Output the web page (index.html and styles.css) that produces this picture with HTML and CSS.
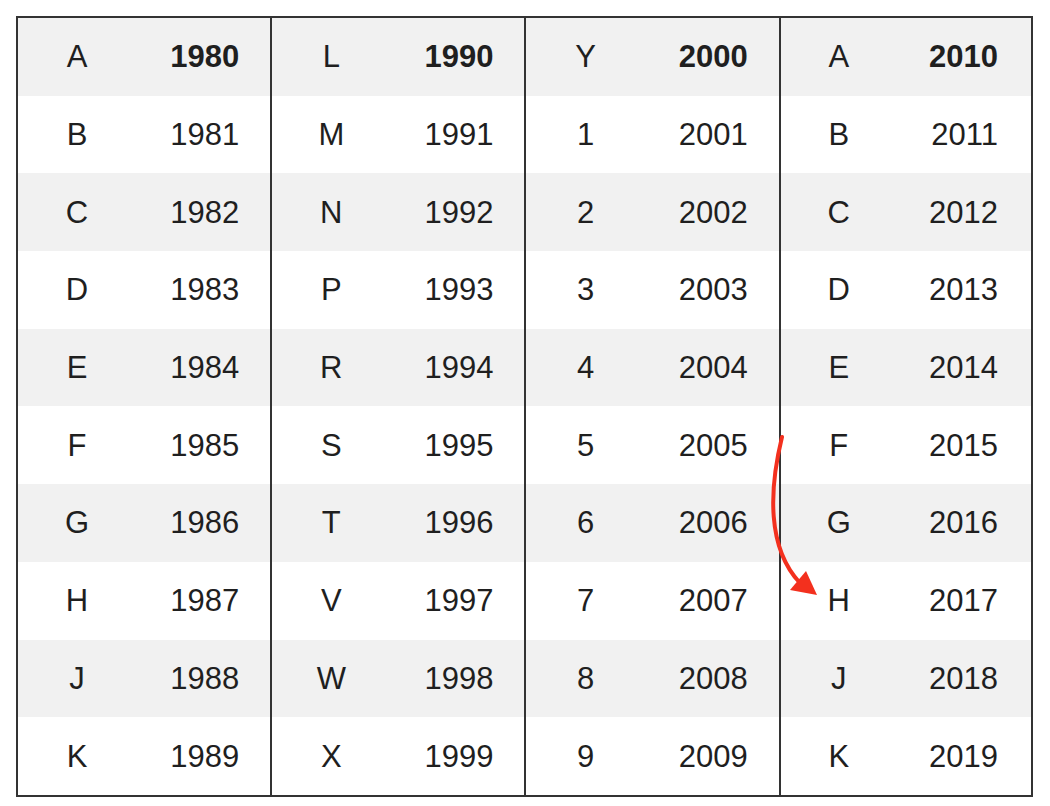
FILE: index.html
```html
<!DOCTYPE html>
<html>
<head>
<meta charset="utf-8">
<link rel="stylesheet" href="styles.css">
</head>
<body>
<div class="page">
  <table class="years">
    <colgroup>
      <col class="c-letter"><col class="c-year">
      <col class="c-letter"><col class="c-year">
      <col class="c-letter"><col class="c-year">
      <col class="c-letter-last"><col class="c-year-last">
    </colgroup>
    <thead>
      <tr>
        <th class="l">A</th><th class="y">1980</th>
        <th class="l">L</th><th class="y">1990</th>
        <th class="l">Y</th><th class="y">2000</th>
        <th class="l">A</th><th class="y last">2010</th>
      </tr>
    </thead>
    <tbody>
      <tr><td class="l">B</td><td class="y">1981</td><td class="l">M</td><td class="y">1991</td><td class="l">1</td><td class="y">2001</td><td class="l">B</td><td class="y last">2011</td></tr>
      <tr><td class="l">C</td><td class="y">1982</td><td class="l">N</td><td class="y">1992</td><td class="l">2</td><td class="y">2002</td><td class="l">C</td><td class="y last">2012</td></tr>
      <tr><td class="l">D</td><td class="y">1983</td><td class="l">P</td><td class="y">1993</td><td class="l">3</td><td class="y">2003</td><td class="l">D</td><td class="y last">2013</td></tr>
      <tr><td class="l">E</td><td class="y">1984</td><td class="l">R</td><td class="y">1994</td><td class="l">4</td><td class="y">2004</td><td class="l">E</td><td class="y last">2014</td></tr>
      <tr><td class="l">F</td><td class="y">1985</td><td class="l">S</td><td class="y">1995</td><td class="l">5</td><td class="y">2005</td><td class="l">F</td><td class="y last">2015</td></tr>
      <tr><td class="l">G</td><td class="y">1986</td><td class="l">T</td><td class="y">1996</td><td class="l">6</td><td class="y">2006</td><td class="l">G</td><td class="y last">2016</td></tr>
      <tr><td class="l">H</td><td class="y">1987</td><td class="l">V</td><td class="y">1997</td><td class="l">7</td><td class="y">2007</td><td class="l">H</td><td class="y last">2017</td></tr>
      <tr><td class="l">J</td><td class="y">1988</td><td class="l">W</td><td class="y">1998</td><td class="l">8</td><td class="y">2008</td><td class="l">J</td><td class="y last">2018</td></tr>
      <tr><td class="l">K</td><td class="y">1989</td><td class="l">X</td><td class="y">1999</td><td class="l">9</td><td class="y">2009</td><td class="l">K</td><td class="y last">2019</td></tr>
    </tbody>
  </table>
  <svg class="arrow" width="1050" height="806" viewBox="0 0 1050 806" aria-hidden="true">
    <path d="M782 437 C 769 490 767 548 800 583" fill="none" stroke="#f3301e" stroke-width="4" stroke-linecap="round"/>
    <polygon points="817,595 790,590 806,571" fill="#f3301e"/>
  </svg>
</div>
</body>
</html>
```
FILE: styles.css
```css
html, body {
  margin: 0;
  padding: 0;
  background: #ffffff;
}

.page {
  position: relative;
  width: 1050px;
  height: 806px;
  padding: 16px 0 0 16px;
  box-sizing: border-box;
}

.years {
  border-collapse: separate;
  border-spacing: 0;
  table-layout: fixed;
  width: 1017px;
  border: 2px solid #333333;
  font-family: "Liberation Sans", Arial, sans-serif;
  font-size: 31px;
  color: #1f1f1f;
}

.c-letter { width: 118px; }
.c-year { width: 136px; }
.c-letter-last { width: 116px; }
.c-year-last { width: 134px; }

.years th,
.years td {
  height: 77.7px;
  padding: 0;
  box-sizing: border-box;
  font-weight: normal;
  line-height: 1;
  vertical-align: middle;
}

.years thead th.y {
  font-weight: bold;
}

.years .l {
  text-align: center;
}

.years .y {
  text-align: right;
  padding-right: 31px;
  border-right: 2px solid #333333;
}

.years .y.last {
  border-right: none;
  padding-right: 33px;
}

.years thead tr,
.years tbody tr:nth-child(even) {
  background: #f1f1f1;
}

.arrow {
  position: absolute;
  left: 0;
  top: 0;
  pointer-events: none;
}
```
